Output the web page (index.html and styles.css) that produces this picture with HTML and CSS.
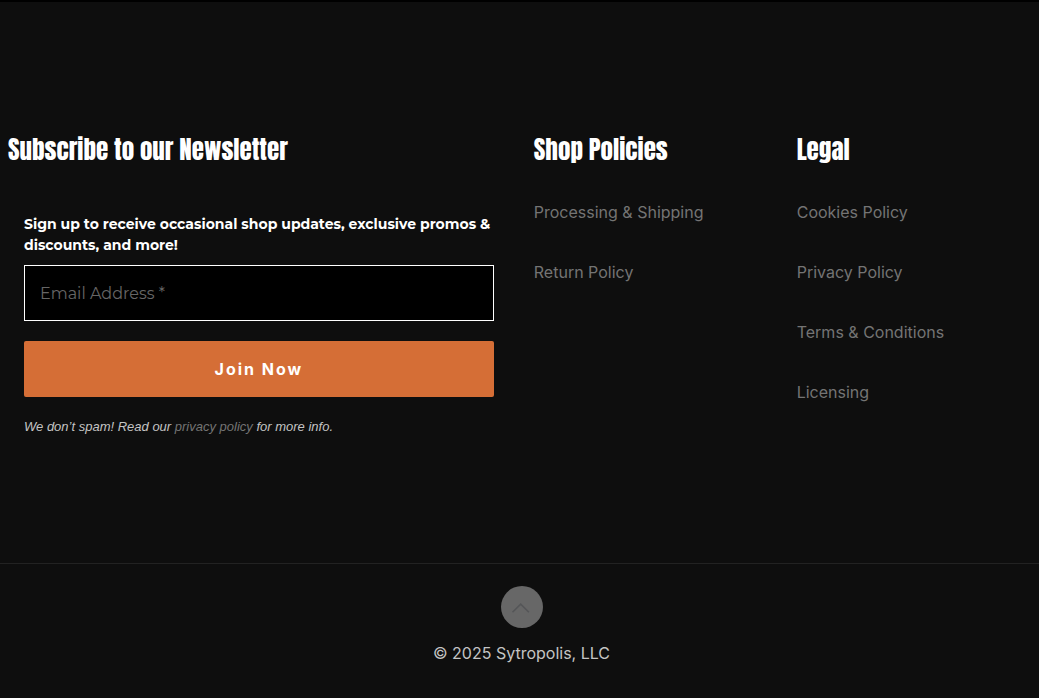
FILE: index.html
```
<!DOCTYPE html>
<html lang="en">
<head>
    <meta charset="UTF-8">
    <meta name="viewport" content="width=device-width, initial-scale=1.0">
    <title>Sytropolis</title>
    <link rel="stylesheet" href="styles.css">
</head>
<body>
    <footer class="footer">
        <!-- Footer widgets -->
        <div class="widgets">
            <section class="widget">
                <h4>Subscribe to our Newsletter</h4>
                <form class="newsletter-form">
                    <label for="email">Sign up to receive occasional shop updates, exclusive promos &amp; discounts, and more!</label>
                    <input type="email" id="email" placeholder="Email Address *" required>
                    <button type="submit" class="join-btn">Join Now</button>
                    <p class="form-note">We don’t spam! Read our <a href="#privacy">privacy policy</a> for more info.</p>
                </form>
            </section>

            <section class="widget">
                <h4>Shop Policies</h4>
                <ul class="footer-menu">
                    <li><a href="#shipping">Processing &amp; Shipping</a></li>
                    <li><a href="#returns">Return Policy</a></li>
                </ul>
            </section>

            <section class="widget">
                <h4>Legal</h4>
                <ul class="footer-menu">
                    <li><a href="#cookies">Cookies Policy</a></li>
                    <li><a href="#privacy">Privacy Policy</a></li>
                    <li><a href="#terms">Terms &amp; Conditions</a></li>
                    <li><a href="#licensing">Licensing</a></li>
                </ul>
            </section>
        </div>

        <!-- Copyright bar -->
        <div class="footer-copy">
            <a class="back-to-top" href="#" aria-label="Back to top">
                <svg width="42" height="42" viewBox="0 0 42 42" fill="none" stroke="#555658" stroke-width="1.6">
                    <path d="M11.5 26.2 L19.7 18.2 L27.9 26.2"/>
                </svg>
            </a>
            <p>© 2025 Sytropolis, LLC</p>
        </div>
    </footer>
</body>
</html>
```
FILE: styles.css
```
* {
    margin: 0;
    padding: 0;
    box-sizing: border-box;
}

body {
    font-family: 'Inter', sans-serif;
    font-size: 16px;
    line-height: 28px;
    background-color: #0e0e0e;
    color: #c4c4c4;
}

a {
    color: #747474;
    text-decoration: none;
}

.footer {
    border-top: 2px solid #000000;
}

/* Widgets */
.widgets {
    display: grid;
    grid-template-columns: 51% 25.5% 1fr;
    padding: 131px 0 126px 8px;
}

h4 {
    font-family: 'Anton', 'Liberation Sans Narrow', 'Liberation Sans', sans-serif;
    font-size: 25px;
    font-weight: 400;
    line-height: 34px;
    color: #ffffff;
}

/* Newsletter */
.newsletter-form {
    display: flex;
    flex-direction: column;
    padding: 47px 40px 0 16px;
}

.newsletter-form label {
    font-family: 'Montserrat', 'Open Sans', sans-serif;
    font-size: 14px;
    font-weight: 700;
    line-height: 21px;
    color: #ffffff;
    margin-bottom: 9px;
}

.newsletter-form input {
    width: 100%;
    height: 56px;
    padding: 0 15px;
    border: 1px solid #ffffff;
    background-color: #000000;
    color: #ffffff;
    font-family: 'Montserrat', 'Open Sans', sans-serif;
    font-size: 16px;
    margin-bottom: 20px;
}

.newsletter-form input::placeholder {
    color: #666666;
}

.join-btn {
    height: 56px;
    border: none;
    border-radius: 2px;
    background-color: #d56e36;
    color: #ffffff;
    font-family: 'Inter', sans-serif;
    font-size: 16px;
    font-weight: 700;
    letter-spacing: 2px;
    cursor: pointer;
}

.form-note {
    margin-top: 20px;
    font-family: 'Liberation Sans', Arial, sans-serif;
    font-size: 13px;
    font-style: italic;
    line-height: 20px;
}

/* Link lists */
.footer-menu {
    list-style: none;
    display: flex;
    flex-direction: column;
    gap: 32px;
    margin-top: 31px;
}

/* Copyright bar */
.footer-copy {
    display: flex;
    flex-direction: column;
    align-items: center;
    gap: 11px;
    padding: 22px 0 30px 4px;
    border-top: 1px solid #222222;
}

.back-to-top {
    width: 42px;
    height: 42px;
    border-radius: 50%;
    background-color: #676767;
}

.back-to-top svg {
    display: block;
}
```
